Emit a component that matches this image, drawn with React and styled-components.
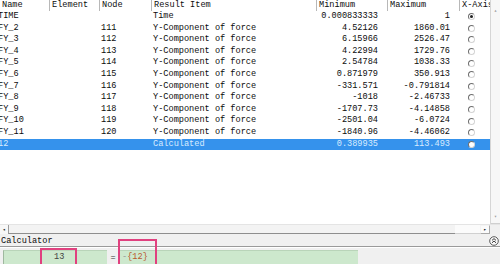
import React from "react";
import styled, { createGlobalStyle } from "styled-components";

const GlobalStyle = createGlobalStyle`
  html, body {
    margin: 0;
    padding: 0;
    background: #ffffff;
  }
`;

const COLS = [49, 50, 52, 165, 71, 72, 31];
const ROW_H = 11.6;

const rows = [
  { name: "TIME", node: "", item: "Time", min: "0.000833333", max: "1", checked: true },
  { name: "FY_2", node: "111", item: "Y-Component of force", min: "4.52126", max: "1860.01" },
  { name: "FY_3", node: "112", item: "Y-Component of force", min: "6.15966", max: "2526.47" },
  { name: "FY_4", node: "113", item: "Y-Component of force", min: "4.22994", max: "1729.76" },
  { name: "FY_5", node: "114", item: "Y-Component of force", min: "2.54784", max: "1038.33" },
  { name: "FY_6", node: "115", item: "Y-Component of force", min: "0.871979", max: "350.913" },
  { name: "FY_7", node: "116", item: "Y-Component of force", min: "-331.571", max: "-0.791814" },
  { name: "FY_8", node: "117", item: "Y-Component of force", min: "-1018", max: "-2.46733" },
  { name: "FY_9", node: "118", item: "Y-Component of force", min: "-1707.73", max: "-4.14858" },
  { name: "FY_10", node: "119", item: "Y-Component of force", min: "-2501.04", max: "-6.0724" },
  { name: "FY_11", node: "120", item: "Y-Component of force", min: "-1840.96", max: "-4.46062" },
  { name: "12", node: "", item: "Calculated", min: "0.389935", max: "113.493", selected: true },
];

const Window = styled.div`
  width: 500px;
  height: 264px;
  overflow: hidden;
  display: flex;
  flex-direction: column;
  background: #f0f0f0;
  font-family: "Liberation Mono", "DejaVu Sans Mono", monospace;
  font-size: 8.6px;
  color: #0c0c0c;
`;

const ListArea = styled.div`
  height: 225px;
  display: flex;
  flex-direction: row;
  background: #ffffff;
`;

const Table = styled.div`
  width: 490px;
  display: flex;
  flex-direction: column;
  border-right: 1px solid #d6d6d6;
`;

const HeaderRow = styled.div`
  height: 11px;
  display: flex;
  flex-direction: row;
  background: #ffffff;
`;

const HeaderCell = styled.div`
  width: ${(p) => p.$w}px;
  box-sizing: border-box;
  padding-left: 2px;
  line-height: 10px;
  white-space: nowrap;
  overflow: hidden;
  border-left: ${(p) => (p.$first ? "none" : "1px solid #b8b8b8")};
`;

const Row = styled.div`
  height: ${ROW_H}px;
  display: flex;
  flex-direction: row;
  background: ${(p) => (p.$selected ? "#3592ec" : "transparent")};
  color: ${(p) => (p.$selected ? "#d8ecff" : "#0c0c0c")};
`;

const Cell = styled.div`
  width: ${(p) => p.$w}px;
  box-sizing: border-box;
  line-height: ${ROW_H}px;
  white-space: nowrap;
  overflow: hidden;
  padding-left: ${(p) => (p.$right ? 0 : 2)}px;
  padding-right: ${(p) => (p.$right ? 9 : 0)}px;
  text-align: ${(p) => (p.$right ? "right" : "left")};
  text-indent: ${(p) => (p.$cut ? "-4px" : "0")};
`;

const RadioCell = styled.div`
  width: ${(p) => p.$w}px;
  display: flex;
  align-items: center;
  padding-left: 9px;
  box-sizing: border-box;
`;

const Radio = styled.span`
  width: 7px;
  height: 7px;
  border-radius: 50%;
  box-sizing: border-box;
  border: 1px solid #6e6e6e;
  border-right-color: #d4d4d4;
  border-bottom-color: #d4d4d4;
  background: #ffffff;
  display: flex;
  align-items: center;
  justify-content: center;

  &::after {
    content: "";
    width: 3px;
    height: 3px;
    border-radius: 50%;
    background: ${(p) => (p.$checked ? "#222" : "transparent")};
  }
`;

const VScroll = styled.div`
  width: 9px;
  height: 224px;
  background: #f7f7f7;
  border-bottom: 1px solid #cfcfcf;
  display: flex;
  flex-direction: column;
  justify-content: space-between;
  align-items: center;
  color: #9a9a9a;
  font-size: 5px;
  padding: 7px 0 3px;
  box-sizing: border-box;
`;

const HScroll = styled.div`
  height: 11px;
  display: flex;
  flex-direction: row;
  background: #f7f7f7;
  border-top: 1px solid #e4e4e4;
  box-sizing: border-box;
`;

const ArrowBtn = styled.div`
  width: ${(p) => p.$w}px;
  display: flex;
  align-items: center;
  justify-content: center;
  font-size: 5px;
  color: #111;
  box-sizing: border-box;
  border: ${(p) => (p.$boxed ? "1px solid #a8a8a8" : "none")};
  border-top-color: #f4f4f4;
  border-left-color: #f4f4f4;
  background: ${(p) => (p.$boxed ? "#fbfbfb" : "transparent")};
`;

const Thumb = styled.div`
  flex: 1;
  border-left: 1px solid #9c9c9c;
  border-bottom: 1px solid #8e8e8e;
  background: #f3f3f3;
`;

const Track = styled.div`
  width: 25px;
  background: #fbfbfb;
  border-bottom: 1px solid #d0d0d0;
`;

const Corner = styled.div`
  width: 10px;
  background: #f0f0f0;
`;

const CalcHeader = styled.div`
  height: 13px;
  display: flex;
  align-items: center;
  justify-content: space-between;
  padding: 2px 1px 0;
  border-bottom: 1px solid #9a9a9a;
  box-sizing: border-box;
  background: #f0f0f0;
`;

const CalcBody = styled.div`
  position: relative;
  flex: 1;
  display: flex;
  flex-direction: row;
  align-items: flex-start;
  padding: 2px 0 0 3px;
  border-top: 1px solid #ffffff;
`;

const Field = styled.div`
  width: ${(p) => p.$w}px;
  height: 14px;
  box-sizing: border-box;
  background: #cde8cd;
  border-left: 1px solid ${(p) => (p.$edge ? "#9fb89f" : "#cde8cd")};
  border-top: 1px solid #b9d4b9;
  line-height: 12px;
  padding-left: ${(p) => p.$pad}px;
  color: ${(p) => p.$color};
  white-space: nowrap;
`;

const Equals = styled.div`
  width: 12px;
  text-align: center;
  line-height: 14px;
  padding-top: 1px;
  color: #333;
`;

const Dash = styled.span`
  color: #999;
`;

const Marker = styled.div`
  position: absolute;
  left: ${(p) => p.$x}px;
  top: ${(p) => p.$y}px;
  width: ${(p) => p.$w}px;
  height: 40px;
  border: 2px solid #e0417f;
  box-sizing: border-box;
  pointer-events: none;
`;

const CollapseIcon = () => (
  <svg width="10" height="10" viewBox="0 0 10 10">
    <circle cx="5" cy="5" r="4.3" fill="#fafafa" stroke="#333" strokeWidth="0.8" />
    <path d="M3 4.4 L5 2.6 L7 4.4 M3 6.8 L5 5 L7 6.8" fill="none" stroke="#222" strokeWidth="0.9" />
  </svg>
);

const headers = ["Name", "Element", "Node", "Result Item", "Minimum", "Maximum", "X-Axis"];

export default function App() {
  return (
    <>
      <GlobalStyle />
      <Window>
        <ListArea>
          <Table>
            <HeaderRow>
              {headers.map((h, i) => (
                <HeaderCell key={h} $w={COLS[i]} $first={i === 0}>
                  {h}
                </HeaderCell>
              ))}
            </HeaderRow>
            {rows.map((r) => (
              <Row key={r.name} $selected={r.selected}>
                <Cell $w={COLS[0]} $cut>
                  {r.name}
                </Cell>
                <Cell $w={COLS[1]} />
                <Cell $w={COLS[2]}>{r.node}</Cell>
                <Cell $w={COLS[3]}>{r.item}</Cell>
                <Cell $w={COLS[4]} $right>
                  {r.min}
                </Cell>
                <Cell $w={COLS[5]} $right>
                  {r.max}
                </Cell>
                <RadioCell $w={COLS[6]}>
                  <Radio $checked={r.checked} $selected={r.selected} />
                </RadioCell>
              </Row>
            ))}
          </Table>
          <VScroll>
            <span>▴</span>
            <span>▾</span>
          </VScroll>
        </ListArea>
        <HScroll>
          <ArrowBtn $w={8}>◂</ArrowBtn>
          <Thumb />
          <Track />
          <ArrowBtn $w={10} $boxed>
            ▸
          </ArrowBtn>
          <Corner />
        </HScroll>
        <CalcHeader>
          <span>Calculator</span>
          <CollapseIcon />
        </CalcHeader>
        <CalcBody>
          <Field $w={104} $pad={50} $color="#444" $edge>
            13
          </Field>
          <Equals>=</Equals>
          <Field $w={239} $pad={2} $color="#b9582c">
            <Dash>-</Dash>
            {"{12}"}
          </Field>
          <Marker $x={40} $y={0} $w={37} />
          <Marker $x={118} $y={-9} $w={39} />
        </CalcBody>
      </Window>
    </>
  );
}
